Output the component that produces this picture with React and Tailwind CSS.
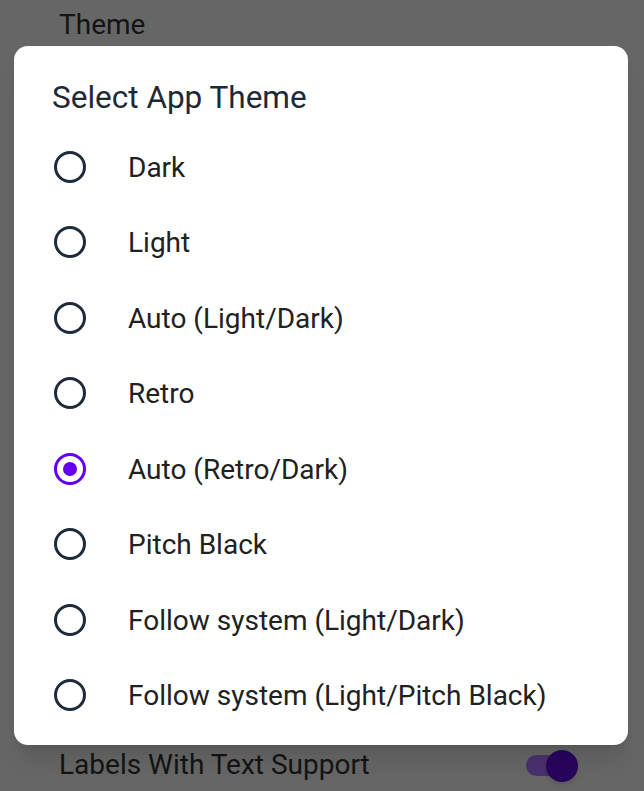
import React, { useState } from 'react';

const themes = [
  'Dark',
  'Light',
  'Auto (Light/Dark)',
  'Retro',
  'Auto (Retro/Dark)',
  'Pitch Black',
  'Follow system (Light/Dark)',
  'Follow system (Light/Pitch Black)',
];

function Radio({ checked }) {
  return (
    <span
      className={`flex h-[32px] w-[32px] shrink-0 items-center justify-center rounded-full border-[3px] ${
        checked ? 'border-[#6200ee]' : 'border-[#1f2a3a]'
      }`}
    >
      {checked && <span className="h-[14px] w-[14px] rounded-full bg-[#6200ee]" />}
    </span>
  );
}

export default function App() {
  const [selected, setSelected] = useState(4);
  return (
    <div
      className="relative h-[791px] w-full overflow-hidden bg-[#666666]"
      style={{ fontFamily: 'Roboto, "Noto Sans", sans-serif' }}
    >
      {/* settings page behind the scrim */}
      <div className="flex h-full flex-col justify-between px-[59px] text-[28px] text-[#141414]">
        <div className="flex h-[50px] items-center">Theme</div>
        <div className="flex h-[52px] items-center justify-between">
          <span>Labels With Text Support</span>
          <span className="relative mr-[19px] h-[21px] w-[40px] rounded-full bg-[#4b306f]">
            <span className="absolute right-[-12px] top-[-5px] h-[32px] w-[32px] rounded-full bg-[#27055c] shadow-md" />
          </span>
        </div>
      </div>

      {/* dialog */}
      <div className="absolute left-[14px] top-[46px] w-[614px] rounded-[14px] bg-white pb-[12px] pt-[34px] shadow-xl">
        <h2 className="px-[38px] text-[31.5px] leading-[36px] text-[#1e2937]">Select App Theme</h2>
        <div className="mt-[13px] flex flex-col">
          {themes.map((t, i) => (
            <button
              key={t}
              className="flex h-[75.5px] items-center pl-[40px] text-left"
              onClick={() => setSelected(i)}
            >
              <Radio checked={selected === i} />
              <span className="ml-[42px] pt-[2px] text-[28px] text-[#212121]">{t}</span>
            </button>
          ))}
        </div>
      </div>
    </div>
  );
}
